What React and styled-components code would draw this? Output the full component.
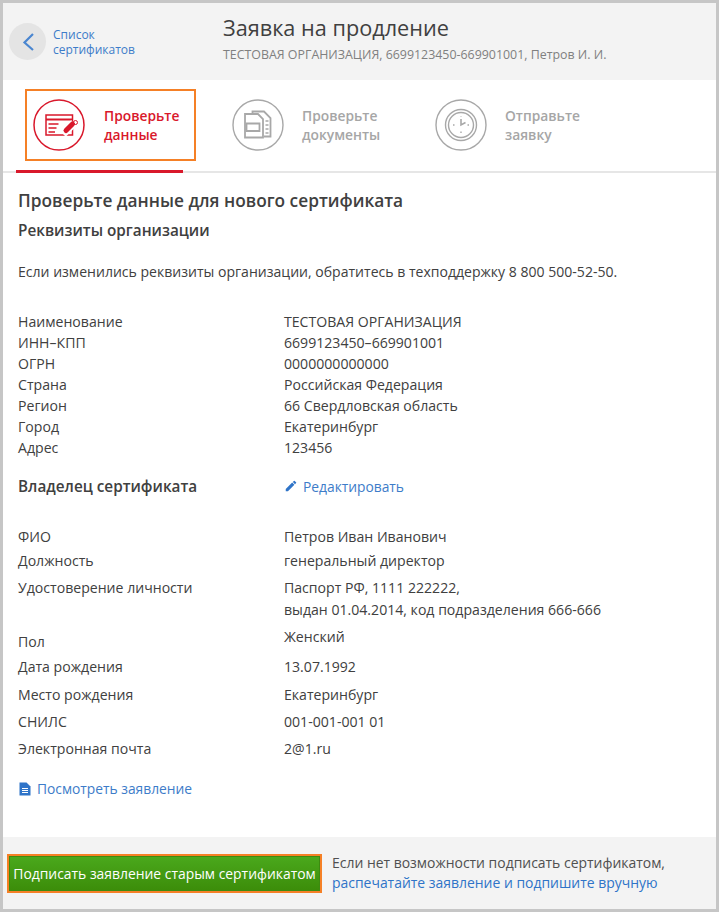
import React from "react";
import styled, { createGlobalStyle } from "styled-components";

const GlobalStyle = createGlobalStyle`
  html, body { margin: 0; padding: 0; background: #fff; }
  body { font-family: "Open Sans", "Noto Sans", "Liberation Sans", sans-serif; color: #404040; }
  * { box-sizing: border-box; }
`;

const requisites = [
  ["Наименование", "ТЕСТОВАЯ ОРГАНИЗАЦИЯ"],
  ["ИНН–КПП", "6699123450–669901001"],
  ["ОГРН", "0000000000000"],
  ["Страна", "Российская Федерация"],
  ["Регион", "66 Свердловская область"],
  ["Город", "Екатеринбург"],
  ["Адрес", "123456"],
];

const owner = [
  { label: "ФИО", value: "Петров Иван Иванович", height: 24 },
  { label: "Должность", value: "генеральный директор", height: 27 },
  { label: "Удостоверение личности", value: "Паспорт РФ, 1111 222222,", extra: "выдан 01.04.2014, код подразделения 666-666", height: 49 },
  { label: "Пол", value: "Женский", height: 30, shift: true },
  { label: "Дата рождения", value: "13.07.1992", height: 28 },
  { label: "Место рождения", value: "Екатеринбург", height: 27 },
  { label: "СНИЛС", value: "001-001-001 01", height: 27 },
  { label: "Электронная почта", value: "2@1.ru", height: 24 },
];

function CheckIcon() {
  return (
    <svg width="52" height="52" viewBox="0 0 52 52" fill="none" stroke="#d9182b">
      <circle cx="26" cy="26" r="25" strokeWidth="1.500" />
      <rect x="13" y="16" width="26.500" height="20" strokeWidth="1.500" />
      <path d="M13 20.500h26.500" strokeWidth="2" />
      <path d="M15.500 25h10M15.500 29h8M15.500 33h6.500" strokeWidth="1.500" />
      <path d="M30 35l11-11" stroke="#fff" strokeWidth="8" />
      <path d="M33 31.500l6.500-6.500" strokeWidth="5" strokeLinecap="round" />
      <circle cx="42.500" cy="23.500" r="2" strokeWidth="1" />
    </svg>
  );
}

function DocsIcon() {
  return (
    <svg width="52" height="52" viewBox="0 0 52 52" fill="none" stroke="#a8a8a8">
      <circle cx="26" cy="26" r="25" strokeWidth="1.400" />
      <path d="M20.500 15v-2.500h11.500l6.500 6.500v18.500H32" strokeWidth="1.800" />
      <path d="M13 15h13l5 5v18.500H13z" fill="#fff" strokeWidth="1.800" />
      <path d="M14.500 24.500h13V32h-13z" strokeWidth="1.800" />
      <path d="M33.500 22h3M33.500 26h3M33.500 30h3M33.500 34h3" strokeWidth="1.600" />
    </svg>
  );
}

function SendIcon() {
  return (
    <svg width="52" height="52" viewBox="0 0 52 52" fill="none" stroke="#a8a8a8">
      <circle cx="26" cy="26" r="25" strokeWidth="1.400" />
      <circle cx="26" cy="26" r="15.500" strokeWidth="1.400" />
      <circle cx="26" cy="26" r="12.500" strokeWidth="1.400" />
      <path d="M26 20v6l4.500-2.500" strokeWidth="1.600" />
      <path d="M26 32.500V34M18 26h1.500M32.500 26H34M26 17.500V18" strokeWidth="1.400" />
    </svg>
  );
}

export default function App() {
  return (
    <>
      <GlobalStyle />
      <Page>
        <Header>
          <BackLink>
            <BackCircle>
              <svg width="14" height="20" viewBox="0 0 14 20" fill="none" stroke="#4a86d0" strokeWidth="2.200">
                <path d="M12 2L3.500 10.500 12 18" />
              </svg>
            </BackCircle>
            <BackText>
              <span>Список</span>
              <span>сертификатов</span>
            </BackText>
          </BackLink>
          <HeaderTitle>
            <Title>Заявка на продление</Title>
            <Subtitle>ТЕСТОВАЯ ОРГАНИЗАЦИЯ, 6699123450-669901001, Петров И. И.</Subtitle>
          </HeaderTitle>
        </Header>

        <Steps>
          <Step $active>
            <StepBox $active>
              <CheckIcon />
              <StepLabel $active>Проверьте<br />данные</StepLabel>
            </StepBox>
          </Step>
          <Step>
            <StepBox>
              <DocsIcon />
              <StepLabel>Проверьте<br />документы</StepLabel>
            </StepBox>
          </Step>
          <Step>
            <StepBox>
              <SendIcon />
              <StepLabel>Отправьте<br />заявку</StepLabel>
            </StepBox>
          </Step>
        </Steps>

        <Content>
          <Heading>Проверьте данные для нового сертификата</Heading>
          <SubHeading>Реквизиты организации</SubHeading>
          <Note>Если изменились реквизиты организации, обратитесь в техподдержку 8 800 500-52-50.</Note>

          <Table>
            {requisites.map(([label, value]) => (
              <Row key={label} $height={21}>
                <Label>{label}</Label>
                <Value>{value}</Value>
              </Row>
            ))}
          </Table>

          <OwnerHead>
            <SubHeading as="div">Владелец сертификата</SubHeading>
            <EditLink>
              <svg width="14" height="14" viewBox="0 0 24 24" fill="#2f74c8">
                <path d="M3 17.250V21h3.750L17.810 9.940l-3.750-3.750L3 17.250zM20.710 7.040a1 1 0 000-1.410l-2.340-2.340a1 1 0 00-1.410 0l-1.830 1.830 3.750 3.750 1.830-1.830z" />
              </svg>
              Редактировать
            </EditLink>
          </OwnerHead>

          <Table $gap={29}>
            {owner.map((item) => (
              <Row key={item.label} $height={item.height}>
                <Label $shift={item.shift}>{item.label}</Label>
                <Value>
                  {item.value}
                  {item.extra && <ExtraLine>{item.extra}</ExtraLine>}
                </Value>
              </Row>
            ))}
          </Table>

          <ViewLink>
            <svg width="12" height="14" viewBox="0 0 12 14" fill="#2f74c8">
              <path d="M0.500 0.500h7l4 4v9h-11z" />
              <path d="M3 6.500h6M3 8.500h6M3 10.500h6" stroke="#fff" strokeWidth="1" />
            </svg>
            Посмотреть заявление
          </ViewLink>
        </Content>

        <Footer>
          <SignFrame>
            <SignButton>Подписать заявление старым сертификатом</SignButton>
          </SignFrame>
          <FooterNote>
            Если нет возможности подписать сертификатом,<br />
            <FooterLink>распечатайте заявление и подпишите вручную</FooterLink>
          </FooterNote>
        </Footer>
      </Page>
    </>
  );
}

const Page = styled.div`
  width: 719px;
  height: 912px;
  border: 3px solid #c6c6c6;
  display: flex;
  flex-direction: column;
  overflow: hidden;
  background: #fff;
`;

const Header = styled.header`
  height: 77px;
  flex: none;
  background: #f3f3f3;
  display: flex;
  align-items: center;
  padding-left: 6px;
`;

const BackLink = styled.div`
  width: 214px;
  display: flex;
  align-items: center;
  gap: 7px;
`;

const BackCircle = styled.div`
  width: 37px;
  height: 37px;
  border-radius: 50%;
  background: #e4e4e4;
  display: flex;
  align-items: center;
  justify-content: center;
`;

const BackText = styled.div`
  display: flex;
  flex-direction: column;
  font-size: 12px;
  line-height: 15px;
  color: #3d7cc9;
`;

const HeaderTitle = styled.div`
  display: flex;
  flex-direction: column;
  gap: 5px;
  margin-top: -7px;
`;

const Title = styled.h1`
  margin: 0;
  font-size: 21.700px;
  line-height: 28px;
  font-weight: 400;
  color: #404040;
`;

const Subtitle = styled.div`
  font-size: 12.400px;
  line-height: 16px;
  color: #808080;
  white-space: nowrap;
`;

const Steps = styled.nav`
  height: 93px;
  flex: none;
  display: flex;
  padding-left: 13px;
  border-bottom: 2px solid #e6e6e6;
`;

const Step = styled.div`
  width: ${(p) => (p.$active ? "167px" : "203px")};
  height: 93px;
  padding-left: ${(p) => (p.$active ? "0" : "46px")};
  border-bottom: 3px solid ${(p) => (p.$active ? "#d9182b" : "transparent")};
  flex: none;
`;

const StepBox = styled.div`
  display: flex;
  align-items: center;
  gap: ${(p) => (p.$active ? "19px" : "18px")};
  height: 72px;
  margin-top: 9px;
  ${(p) => p.$active && "width: 171px; margin-left: 9px; padding-left: 6px; border: 2.5px solid #f58026;"}
  ${(p) => !p.$active && "padding-left: 3px;"}
  svg { flex: none; }
`;

const StepLabel = styled.div`
  font-size: 13.800px;
  line-height: 19.500px;
  font-weight: 600;
  color: ${(p) => (p.$active ? "#d9182b" : "#a6a6a6")};
`;

const Content = styled.main`
  flex: 1;
  padding: 16px 15px 0;
`;

const Heading = styled.h2`
  margin: 0;
  font-size: 17.300px;
  line-height: 24px;
  font-weight: 600;
  color: #404040;
`;

const SubHeading = styled.h3`
  margin: 5px 0 0;
  font-size: 15.300px;
  line-height: 24px;
  font-weight: 600;
  color: #404040;
`;

const Note = styled.p`
  margin: 18px 0 0;
  font-size: 14.050px;
  line-height: 24px;
  white-space: nowrap;
`;

const Table = styled.div`
  margin-top: ${(p) => p.$gap || 28}px;
  font-size: 14.100px;
`;

const Row = styled.div`
  display: flex;
  height: ${(p) => p.$height}px;
  line-height: 20px;
`;

const Label = styled.div`
  width: 266px;
  flex: none;
  ${(p) => p.$shift && "padding-top: 5px;"}
`;

const Value = styled.div`
  white-space: nowrap;
`;

const ExtraLine = styled.div`
  margin-top: 2px;
`;

const OwnerHead = styled.div`
  display: flex;
  align-items: center;
  margin-top: 15px;
  ${SubHeading} { width: 266px; margin: 0; }
`;

const EditLink = styled.a`
  display: flex;
  align-items: center;
  gap: 5px;
  font-size: 13.800px;
  color: #3d7cc9;
`;

const ViewLink = styled.a`
  display: flex;
  align-items: center;
  gap: 6px;
  margin-top: 16px;
  margin-left: 1px;
  font-size: 13.800px;
  line-height: 20px;
  color: #3d7cc9;
`;

const Footer = styled.footer`
  height: 72px;
  flex: none;
  background: #f3f3f3;
  display: flex;
  align-items: center;
  padding: 0 0 0 4px;
  gap: 10px;
`;

const SignFrame = styled.div`
  border: 2.500px solid #f58026;
  flex: none;
`;

const SignButton = styled.button`
  display: block;
  width: 311px;
  height: 35px;
  padding: 0;
  border: 1px solid #3d8a10;
  background: linear-gradient(#4aa81c, #3c8d0a);
  color: #fff;
  font-family: inherit;
  font-size: 13.900px;
  white-space: nowrap;
`;

const FooterNote = styled.div`
  font-size: 13.950px;
  line-height: 20px;
  color: #505050;
  white-space: nowrap;
`;

const FooterLink = styled.a`
  color: #2f74c8;
`;
